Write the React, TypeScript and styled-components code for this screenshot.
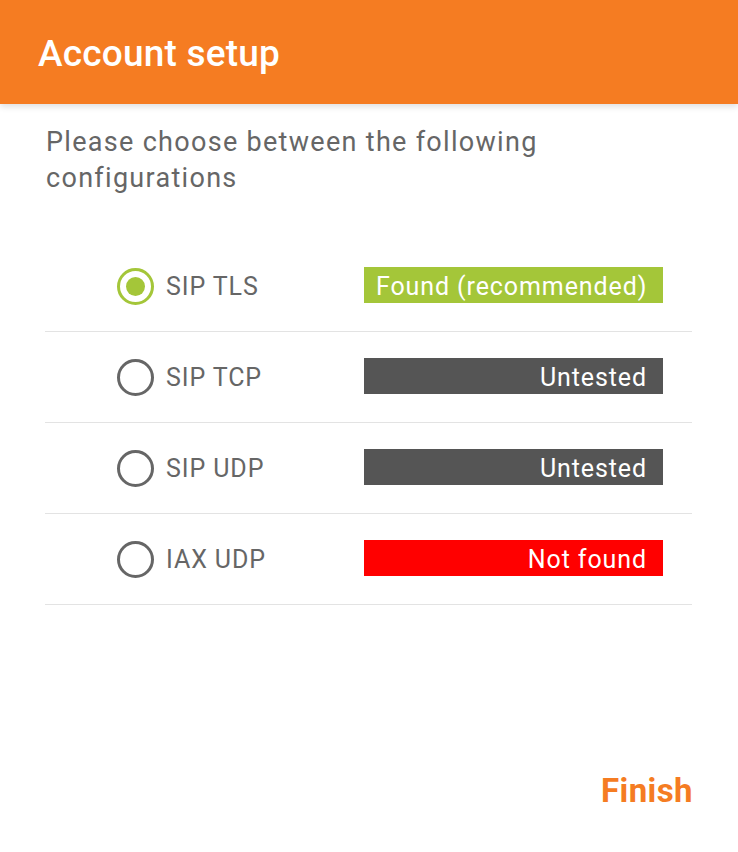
import React from "react";
import styled, { createGlobalStyle } from "styled-components";

const Global = createGlobalStyle`
  html, body { margin: 0; padding: 0; background: #fff; }
  body { font-family: Roboto, "Noto Sans", sans-serif; }
`;

const Page = styled.div`
  width: 738px;
  height: 852px;
  display: flex;
  flex-direction: column;
  background: #fff;
`;

const Header = styled.header`
  height: 104px;
  background: #f57c22;
  display: flex;
  align-items: center;
  padding-left: 38px;
  box-shadow: 0 3px 6px rgba(0, 0, 0, 0.12);
  position: relative;
  z-index: 1;
`;

const Title = styled.h1`
  margin: 0;
  color: #fff;
  font-size: 37px;
  font-weight: 500;
  letter-spacing: 0.2px;
  padding-top: 2px;
`;

const Body = styled.main`
  flex: 1;
  display: flex;
  flex-direction: column;
  padding: 0 46px 0 45px;
`;

const Intro = styled.p`
  margin: 20px 0 0 1px;
  color: #666;
  font-size: 27px;
  letter-spacing: 1.3px;
  line-height: 36px;
  width: 560px;
`;

const List = styled.div`
  margin-top: 45px;
  display: flex;
  flex-direction: column;
`;

const Row = styled.label`
  height: 90px;
  border-bottom: 1px solid #e3e3e3;
  display: flex;
  align-items: center;
  padding-left: 72px;
  padding-right: 29px;
`;

const Radio = styled.span<{ $checked?: boolean }>`
  box-sizing: border-box;
  width: 37px;
  height: 37px;
  border-radius: 50%;
  border: 3.5px solid ${(p) => (p.$checked ? "#a4c639" : "#666")};
  display: flex;
  align-items: center;
  justify-content: center;
  flex-shrink: 0;
  &::after {
    content: "";
    display: ${(p) => (p.$checked ? "block" : "none")};
    width: 19px;
    height: 19px;
    border-radius: 50%;
    background: #a4c639;
  }
`;

const Label = styled.span`
  margin-left: 12px;
  color: #666;
  font-size: 25px;
  letter-spacing: 0.9px;
  flex: 1;
`;

const Badge = styled.span<{ $bg: string; $align: "left" | "right" }>`
  width: 299px;
  height: 36px;
  margin-top: -2px;
  box-sizing: border-box;
  background: ${(p) => p.$bg};
  color: #fff;
  font-size: 25px;
  letter-spacing: 0.9px;
  line-height: 39px;
  padding: 0 16px 0 12px;
  white-space: nowrap;
  overflow: hidden;
  text-align: ${(p) => p.$align};
`;

const Footer = styled.div`
  display: flex;
  justify-content: flex-end;
  padding: 0 45px 42px 0;
  margin-top: auto;
`;

const Finish = styled.button`
  border: none;
  background: none;
  padding: 0;
  color: #f57c22;
  font-family: Roboto, sans-serif;
  font-size: 33px;
  letter-spacing: 0.4px;
  font-weight: 700;
  cursor: pointer;
`;

const rows = [
  { name: "SIP TLS", status: "Found (recommended)", bg: "#a4c639", align: "left" as const, checked: true },
  { name: "SIP TCP", status: "Untested", bg: "#555555", align: "right" as const },
  { name: "SIP UDP", status: "Untested", bg: "#555555", align: "right" as const },
  { name: "IAX UDP", status: "Not found", bg: "#ff0000", align: "right" as const },
];

export default function App() {
  return (
    <Page>
      <Global />
      <Header>
        <Title>Account setup</Title>
      </Header>
      <Body>
        <Intro>Please choose between the following configurations</Intro>
        <List>
          {rows.map((r) => (
            <Row key={r.name}>
              <Radio $checked={r.checked} />
              <Label>{r.name}</Label>
              <Badge $bg={r.bg} $align={r.align}>{r.status}</Badge>
            </Row>
          ))}
        </List>
      </Body>
      <Footer>
        <Finish>Finish</Finish>
      </Footer>
    </Page>
  );
}
